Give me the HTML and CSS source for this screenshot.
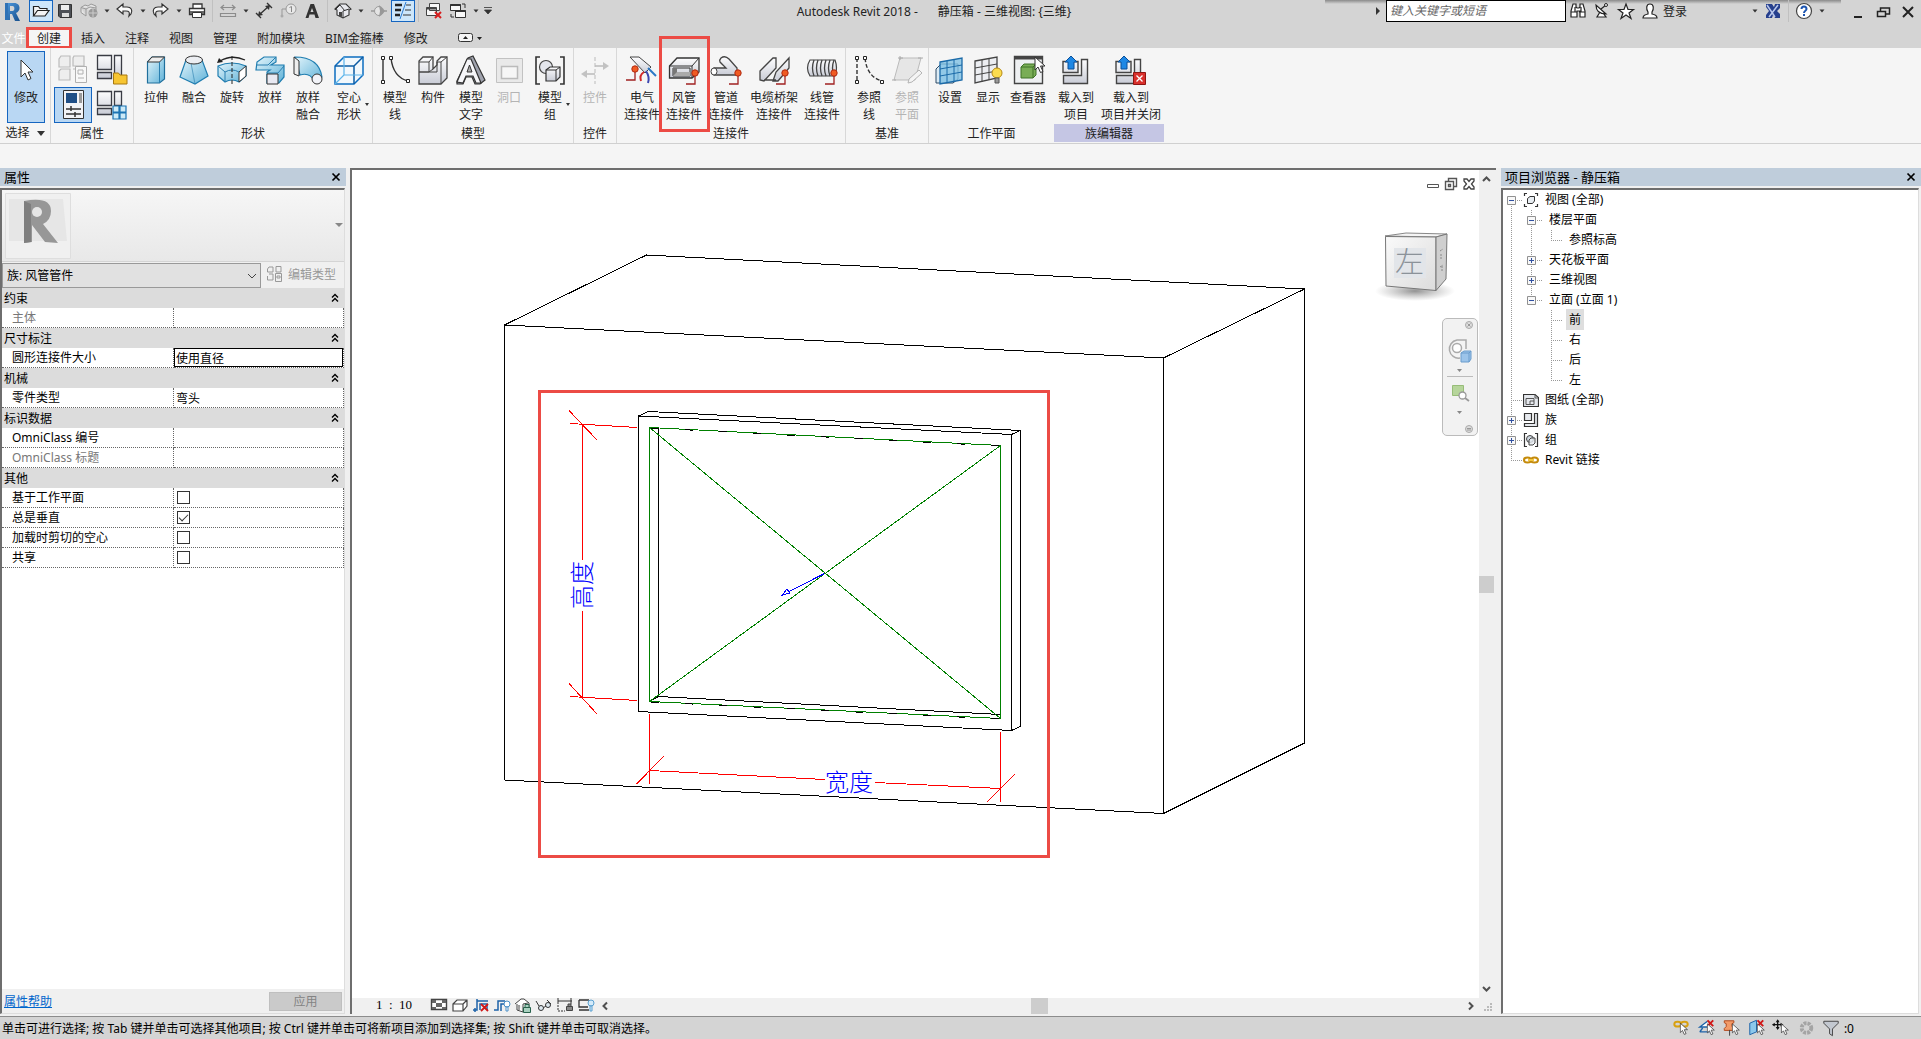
FILE: index.html
```html
<!DOCTYPE html>
<html lang="zh-CN">
<head>
<meta charset="utf-8">
<title>Autodesk Revit 2018 - 静压箱</title>
<link rel="stylesheet" href="styles.css">
</head>
<body>
<svg class="defs" width="0" height="0" aria-hidden="true">
  <defs>
    <linearGradient id="gBlue" x1="0" y1="0" x2="1" y2="1"><stop offset="0" stop-color="#e2f4fb"/><stop offset="1" stop-color="#5fb2d8"/></linearGradient>
    <linearGradient id="gGray" x1="0" y1="0" x2="0" y2="1"><stop offset="0" stop-color="#fdfdfe"/><stop offset="1" stop-color="#c9ccd6"/></linearGradient>
    <linearGradient id="gLogo" x1="0" y1="0" x2="1" y2="1"><stop offset="0" stop-color="#4f9be0"/><stop offset="1" stop-color="#174f8c"/></linearGradient>
    <linearGradient id="gCube" x1="0" y1="0" x2="1" y2="1"><stop offset="0" stop-color="#fafafa"/><stop offset="1" stop-color="#dcdcdc"/></linearGradient>
    <radialGradient id="gShadow"><stop offset="0" stop-color="#777" stop-opacity=".8"/><stop offset="1" stop-color="#999" stop-opacity="0"/></radialGradient>
    <symbol id="dd" viewBox="0 0 12 24"><path d="M3.500 9.500h5l-2.500 3z" fill="#333"/></symbol>
    <symbol id="cursor" viewBox="0 0 12 18"><path d="M1 1v13l3-3 2.500 5.500 2.500-1-2.500-5.500h4.500z" fill="#fff" stroke="#333"/></symbol>
    <symbol id="pin" viewBox="0 0 14 16"><path d="M0 15h9V6" fill="none" stroke="#a02020" stroke-width="1.300"/><circle cx="9" cy="4" r="3.200" fill="#f05a22" stroke="#b02a12"/></symbol>
    <symbol id="collapse" viewBox="0 0 8 10"><path d="M1 4.500 4 1.500l3 3M1 8.500l3-3 3 3" fill="none" stroke="#000" stroke-width="1.400"/></symbol>
    <symbol id="minus" viewBox="0 0 9 9"><path d="M.500.500h8v8h-8z" fill="#f8f8f8" stroke="#919191"/><path d="M2 4.500h5" stroke="#3050a0"/></symbol>
    <symbol id="plus" viewBox="0 0 9 9"><path d="M.500.500h8v8h-8z" fill="#f8f8f8" stroke="#919191"/><path d="M2 4.500h5M4.500 2v5" stroke="#3050a0"/></symbol>
  </defs>
</svg>

<header class="titlebar">
  <div class="qat">
    <button class="qi logo" aria-label="应用程序菜单"><svg width="24" height="24" viewBox="0 0 24 24"><path d="M5 3h9c4 0 5.500 2.500 5.500 5s-1.500 4-3.500 5l4 8h-5l-3-7h-2v6H5zM10 6v5h2.500c2.500 0 2.500-5 0-5z" fill="url(#gLogo)" fill-rule="evenodd"/><path d="M5 3h3v17H5z" fill="#2f72b6"/></svg></button>
    <button class="qi on" aria-label="打开"><svg width="24" height="22" viewBox="0 0 24 22"><path d="M4.500 16V6.500h5l1.500 2h7v2.500M4.500 16l4-5.500H20L16 16z" fill="#f4f4f4" stroke="#222" stroke-width="1.200"/></svg></button>
    <button class="qi" aria-label="保存"><svg width="24" height="22" viewBox="0 0 24 22"><path d="M5.500 4.500h13v13H7l-1.500-1.500z" fill="#4d5056" stroke="#333"/><path d="M8 5h8v5H8z" fill="#eee"/><path d="M9 13h7v4H9z" fill="#ddd"/></svg></button>
    <button class="qi" aria-label="同步"><svg width="24" height="22" viewBox="0 0 24 22"><path d="M4 7.500 8 5l3 1 3-2 5 2v6M4 7.500v5L9 16M4 7.500 9 9l4-2 6 1M9 9v7" fill="#e4e4e4" stroke="#999"/><circle cx="16" cy="13" r="4.500" fill="#999"/><path d="M12 13h8M16 9v8" stroke="#ccc"/></svg></button>
    <svg class="dd"><use href="#dd"/></svg>
    <button class="qi" aria-label="放弃"><svg width="24" height="22" viewBox="0 0 24 22"><path d="m4 9 6-5v3h4c4 0 6 3 4 7l-2 2c1-4 0-5-3-5h-3v3z" fill="#fafafa" stroke="#333" stroke-width="1.200"/></svg></button>
    <svg class="dd"><use href="#dd"/></svg>
    <button class="qi" aria-label="重做"><svg width="24" height="22" viewBox="0 0 24 22"><path d="m19 9-6-5v3H9c-4 0-6 3-4 7l2 2c-1-4 0-5 3-5h3v3z" fill="#fafafa" stroke="#333" stroke-width="1.200"/></svg></button>
    <svg class="dd"><use href="#dd"/></svg>
    <button class="qi" aria-label="打印"><svg width="24" height="22" viewBox="0 0 24 22"><path d="M8 8V4h9v4M4.500 8.500h15v6h-15z" fill="#fff" stroke="#333" stroke-width="1.300"/><path d="M5 11h14v3H5z" fill="#666"/><path d="M7.500 12.500h9v5h-9z" fill="#fff" stroke="#333"/></svg></button>
    <i class="sep"></i>
    <button class="qi" aria-label="测量"><svg width="24" height="22" viewBox="0 0 24 22"><path d="M5 7.500h14M8 5 5 7.500 8 10M16 5l3 2.500-3 2.500M4.500 13.500h15v3h-15z" fill="none" stroke="#8c8c8c" stroke-width="1.200"/></svg></button>
    <svg class="dd"><use href="#dd"/></svg>
    <button class="qi" aria-label="对齐尺寸标注"><svg width="24" height="22" viewBox="0 0 24 22"><path d="M7 15 17 6M4 13l5 5M15 3l5 5" stroke="#333" stroke-width="1.400"/><path d="m6 16 1-5 4 4zM18 5l-5 1 4 4z" fill="#333"/></svg></button>
    <button class="qi" aria-label="按类别标记"><svg width="24" height="22" viewBox="0 0 24 22"><path d="M6 16V9h5" fill="none" stroke="#999"/><circle cx="6" cy="16" r="1.500" fill="#aaa"/><circle cx="15" cy="9" r="5" fill="#e8e8e8" stroke="#999"/><path d="m13.500 7.500 2-1V12" fill="none" stroke="#888"/></svg></button>
    <button class="qi" aria-label="文字"><svg width="24" height="22" viewBox="0 0 24 22"><path d="M10.500 4h3.500L19 18h-3.500l-1-3.500h-5l-1 3.500H5.500zm1.500 4L10.500 12h3z" fill="#333" fill-rule="evenodd"/></svg></button>
    <i class="sep"></i>
    <button class="qi" aria-label="默认三维视图"><svg width="24" height="22" viewBox="0 0 24 22"><path d="m4 9 5-5 6 0 5 5-2 1v5l-6 3-6-3v-5z" fill="#e8e9ee" stroke="#333" stroke-width="1.100"/><path d="m4 10 5-5 5 6M12 18v-7l6-2" fill="none" stroke="#333"/><path d="M8 12h3v5l-3-1z" fill="#444"/></svg></button>
    <svg class="dd"><use href="#dd"/></svg>
    <button class="qi" aria-label="剖面"><svg width="24" height="22" viewBox="0 0 24 22"><path d="M4 11h3M17 11h3" stroke="#999" stroke-width="1.500"/><circle cx="12" cy="11" r="4.500" fill="#e4e4e4" stroke="#999"/><path d="M12 5l6 6-6 6 1-6z" fill="#999"/></svg></button>
    <button class="qi on" aria-label="细线"><svg width="24" height="22" viewBox="0 0 24 22"><path d="M4 5h7M4 10h6M4 15h5" stroke="#222" stroke-width="2.500"/><path d="m15 2-6 17" stroke="#2b7cd3"/><path d="M15 5h5M14 10h6M12 15h8" stroke="#333"/></svg></button>
    <i class="sep"></i>
    <button class="qi" aria-label="关闭隐藏窗口"><svg width="24" height="22" viewBox="0 0 24 22"><path d="M7.500 3.500h10v7h-10zM4.500 7.500h10v8h-10z" fill="#f8f8f8" stroke="#444"/><path d="M4.500 8.500h10" stroke="#444" stroke-width="2"/><path d="m13 12 6 6m0-6-6 6" stroke="#d81e1e" stroke-width="2"/></svg></button>
    <button class="qi" aria-label="切换窗口"><svg width="24" height="22" viewBox="0 0 24 22"><path d="M4.500 4.500h10v6h-10zM9.500 10.500h10v7h-10z" fill="#f8f8f8" stroke="#333"/><path d="M4.500 5h10M9.500 11h10" stroke="#333" stroke-width="2"/><path d="M16 4h3v4M8 17H5v-3" fill="none" stroke="#333"/></svg></button>
    <svg class="dd"><use href="#dd"/></svg>
    <svg class="dd" viewBox="0 0 12 24"><path d="M2 7.500h8M2.500 10h7l-3.500 4z" fill="#333" stroke="#333" stroke-width=".8"/></svg>
  </div>
  <h1 class="title"><span>Autodesk Revit 2018 -</span><span>静压箱 - 三维视图: {三维}</span></h1>
  <div class="info">
    <svg width="8" height="22" viewBox="0 0 8 22"><path d="M2 7v8l4-4z" fill="#333"/></svg>
    <input class="search" type="text" aria-label="搜索" placeholder="键入关键字或短语">
    <button class="qi" aria-label="查找"><svg width="24" height="22" viewBox="0 0 24 22"><path d="M7 4h3v3l1 1h2l1-1V4h3l2 7v6h-5v-6h-3v6H5v-6zM5 12h6M13 12h6M9 7v5M15 7v5" fill="#fff" stroke="#222" stroke-width="1.200"/></svg></button>
    <button class="qi" aria-label="通讯中心"><svg width="24" height="22" viewBox="0 0 24 22"><path d="M6 5c0 6 4 9 10 9zM11 9l5-4M10 12l-3 5h9l-3-4" fill="#fff" stroke="#222" stroke-width="1.200"/><circle cx="16" cy="5" r="1.500" fill="#fff" stroke="#222"/></svg></button>
    <button class="qi" aria-label="收藏夹"><svg width="24" height="22" viewBox="0 0 24 22"><path d="m12 4 2 5.500h5.500L15 13l2 5.500-5-3.500-5 3.500L9 13 4.500 9.500H10z" fill="#fff" stroke="#222" stroke-width="1.200"/></svg></button>
    <button class="qi" aria-label="用户"><svg width="24" height="22" viewBox="0 0 24 22"><path d="M12 4c-4 0-4 5-2 8v2c-3 .500-5 1.500-5 4h14c0-2.500-2-3.500-5-4v-2c2-3 2-8-2-8z" fill="#fff" stroke="#222" stroke-width="1.200"/></svg></button>
    <button class="login">登录</button>
    <svg class="dd"><use href="#dd"/></svg>
    <button class="qi" aria-label="Exchange"><svg width="24" height="22" viewBox="0 0 24 22"><path d="M5 4h6l2 3 1-3h5v4l-3 3 3 3v4h-5l-2-3-1 3H5v-3l3-4-3-4z" fill="#263f8d"/><path d="m6 5 8 12M17 5 8 17" stroke="#b9c7ec" stroke-width="1.500"/></svg></button>
    <i class="sep"></i>
    <button class="qi" aria-label="帮助"><svg width="24" height="22" viewBox="0 0 24 22"><circle cx="12" cy="11" r="7.500" fill="#fff" stroke="#444" stroke-width="1.200"/><path d="M9.500 9c0-3.500 5-3.500 5 0 0 2-2.500 1.500-2.500 4M12 14v2" fill="none" stroke="#1d55b0" stroke-width="2"/></svg></button>
    <svg class="dd"><use href="#dd"/></svg>
    <div class="winbtns">
      <button class="qi" aria-label="最小化"><svg width="24" height="22" viewBox="0 0 24 22"><path d="M8 17h8" stroke="#222" stroke-width="2"/></svg></button>
      <button class="qi" aria-label="还原"><svg width="24" height="22" viewBox="0 0 24 22"><path d="M9.500 11V8h9v6H15M6.500 11.500h8v5h-8z" fill="none" stroke="#222" stroke-width="1.500"/></svg></button>
      <button class="qi" aria-label="关闭"><svg width="24" height="22" viewBox="0 0 24 22"><path d="m7 7 10 10M17 7 7 17" stroke="#222" stroke-width="2"/></svg></button>
    </div>
  </div>
</header>

<nav class="tabs">
  <button class="tab file">文件</button>
  <button class="tab active">创建</button>
  <button class="tab">插入</button>
  <button class="tab">注释</button>
  <button class="tab">视图</button>
  <button class="tab">管理</button>
  <button class="tab">附加模块</button>
  <button class="tab">BIM金箍棒</button>
  <button class="tab">修改</button>
  <button class="tab mini" aria-label="最小化功能区"><svg width="30" height="12" viewBox="0 0 30 12"><rect x=".500" y="1.500" width="14" height="8" rx="2" fill="#f4f4f4" stroke="#333"/><path d="m5 7 2.500-3L10 7zM19 5h5l-2.500 3z" fill="#222"/></svg></button>
</nav>

<section class="ribbon">
  <div class="panel p-select">
    <div class="tools"><button class="rb chosen"><svg class="ic" viewBox="0 0 32 32"><path d="M11 6v17l4-4 3 7 3-1.500-3-6.500h5z" fill="#fff" stroke="#333"/></svg><span>修改</span></button></div>
    <div class="ptitle">选择 <svg width="8" height="5" viewBox="0 0 8 5"><path d="M0 0h8L4 5z" fill="#333"/></svg></div>
  </div>
  <div class="panel p-props">
    <div class="grid4">
      <button class="sb" disabled aria-label="族类型"><svg class="ic" viewBox="0 0 32 32"><path d="M4 3h9v11H2V6zM17 3h10v10H16V5zM4 16h9v11H2v-9zM16 16h8" fill="#eee" stroke="#bbb" stroke-width="1.200"/><path d="M18.500 13.500h11v16h-11zM21 17h5v4h-5zM21 25h6" fill="#f8f8f8" stroke="#b0b0b0"/></svg></button>
      <button class="sb" aria-label="族类别和族参数"><svg class="ic" viewBox="0 0 32 32"><path d="M2.500 2.500h14v14h-14zM19.500 2.500h7v23h-7zM2.500 19.500h14v6h-14z" fill="url(#gGray)" stroke="#3a3c44" stroke-width="1.300"/><path d="M18.500 31v-11h5l1.500 2h7v9z" fill="#f7c531" stroke="#a87910"/></svg></button>
      <button class="sb chosen" aria-label="属性"><svg class="ic" viewBox="0 0 32 32"><path d="M6.500 1.500h20v28h-20z" fill="#f2f3f6" stroke="#333"/><path d="M9 4h11v10H9z" fill="#1e4e86"/><path d="M22 4h3v10h-3z" fill="#999"/><path d="M9 20h15M9 25h15M14 17v5M18 23v5" stroke="#333" stroke-width="1.500"/></svg></button>
      <button class="sb" aria-label="族类型选择"><svg class="ic" viewBox="0 0 32 32"><path d="M2.500 2.500h14v14h-14zM19.500 2.500h7v14h-7zM2.500 19.500h14v6h-14z" fill="url(#gGray)" stroke="#3a3c44" stroke-width="1.300"/><path d="M18 17h6v6h-6zM25 17h6v6h-6zM18 24h6v6h-6zM25 24h6v6h-6z" fill="#cdeaf7" stroke="#1c74b4" stroke-width="1.200"/></svg></button>
    </div>
    <div class="ptitle">属性</div>
  </div>
  <div class="panel p-shape">
    <div class="tools">
      <button class="rb"><svg class="ic" viewBox="0 0 32 32"><path d="M7.500 8v21h12l5-4V3H12z" fill="url(#gBlue)" stroke="#1f6f9c" stroke-width="1.200"/><path d="M7.500 8 12 3h12.500l-5 5z" fill="#eee" stroke="#333"/><path d="M19.500 8v21" stroke="#2a7fb0"/></svg><span>拉伸</span></button>
      <button class="rb"><svg class="ic" viewBox="0 0 32 32"><path d="m8 6-6 17 15 7 13-8L24 6z" fill="url(#gBlue)" stroke="#1f7db0" stroke-width="1.200"/><path d="m13 9 4 21" stroke="#2a7fb0" opacity=".6"/><ellipse cx="16" cy="6" rx="8.500" ry="4" fill="#eceef2" stroke="#333"/></svg><span>融合</span></button>
      <button class="rb"><svg class="ic" viewBox="0 0 32 32"><path d="M2 12q14-6 28 0v10l-7 6q-7-4-14 0l-7-6z" fill="url(#gBlue)" stroke="#1f7db0" stroke-width="1.200"/><path d="M23 18 30 12v10l-7 6z" fill="#fff" stroke="#333"/><path d="M2 12l7 6q7-4 14 0M9 18v10" fill="none" stroke="#2a7fb0"/><path d="M16 2v28" stroke="#222" stroke-dasharray="4 2"/><path d="M4 7Q16 0 29 6" fill="none" stroke="#222" stroke-width="1.300"/><path d="m1 9 2-5 4 4z" fill="#222"/></svg><span>旋转</span></button>
      <button class="rb"><svg class="ic" viewBox="0 0 32 32"><path d="M10 3h12v5l-5 3h13v12l-5 6H13V18l3-2H2l1-8z" fill="url(#gBlue)" stroke="#1f7db0" stroke-width="1.200"/><path d="M2 11h12l8-8M13 19h11l6-7" fill="none" stroke="#2a7fb0"/><path d="M13 20h11v10H13z" fill="#e8e9f2" stroke="#333"/></svg><span>放样</span></button>
      <button class="rb"><svg class="ic" viewBox="0 0 32 32"><path d="M3 3q24 0 27 20l-8 4q-4-9-14-6z" fill="url(#gBlue)" stroke="#1f7db0" stroke-width="1.200"/><path d="M2 3l5 4v15l-5-2z" fill="#eee" stroke="#333"/><circle cx="25" cy="25" r="5" fill="#f2f3f8" stroke="#333"/></svg><span>放样<br>融合</span></button>
      <button class="rb w44 menu"><svg class="ic" viewBox="0 0 32 32"><path d="M2 12 11 3h19v18l-9 9H2z" fill="#f2f8fc" stroke="#0d6dc0" stroke-width="1.500"/><path d="M2 12h19v18M21 12l9-9" fill="none" stroke="#0d5ca4" stroke-width="1.500"/><path d="M11 3v18L2 30M11 21h19" fill="none" stroke="#5ab4ea" stroke-width="1.200"/></svg><span>空心<br>形状</span></button>
    </div>
    <div class="ptitle">形状</div>
  </div>
  <div class="panel p-model">
    <div class="tools">
      <button class="rb"><svg class="ic" viewBox="0 0 32 32"><path d="M4 4v24M12 4q2 19 17 23" fill="none" stroke="#333" stroke-width="1.400"/><path d="M2.500 2.500h3v3h-3zM2.500 26.500h3v3h-3zM10.500 2.500h3v3h-3zM27.500 25.500h3v3h-3z" fill="#fff" stroke="#222"/></svg><span>模型<br>线</span></button>
      <button class="rb"><svg class="ic" viewBox="0 0 32 32"><path d="M2 18V7l4-4h10v12l4-4V7l4-4h6v21l-6 6H2z" fill="url(#gGray)" stroke="#444" stroke-width="1.300"/><path d="M2 8h10v10H2M12 8l4-5M20 8v10H2M24 8v22M20 8h4l6-5M12 18l4-3" fill="none" stroke="#444"/></svg><span>构件</span></button>
      <button class="rb"><svg class="ic" viewBox="0 0 32 32"><path d="m2 27 11-23 5-2 12 24-5 4h-5l-3-7h-6l-3 7H2z" fill="#9fa2ad" stroke="#333" stroke-width="1.200"/><path d="m2 28 10-23h4l10 24h-5l-3-7h-7l-3 7z" fill="#f6f6f9" stroke="#333" stroke-width="1.200"/><path d="m12 18 2.500-7 2.500 7z" fill="#aaa" stroke="#333"/></svg><span>模型<br>文字</span></button>
      <button class="rb" disabled><svg class="ic" viewBox="0 0 32 32"><path d="M3.500 4.500h26v24h-26z" fill="#e9e9e9" stroke="#c2c2c2"/><path d="M8.500 12.500h16v12h-16z" fill="#f6f6f6" stroke="#bbb" stroke-width="1.500"/></svg><span>洞口</span></button>
      <button class="rb w44 menu"><svg class="ic" viewBox="0 0 32 32"><path d="M6 3H2v27h4M26 3h4v27h-4" fill="none" stroke="#333" stroke-width="1.600"/><circle cx="12" cy="13" r="6.500" fill="#e4e6ec" stroke="#444" stroke-width="1.200"/><path d="M12 16l4-3h10v10l-4 4H12z" fill="url(#gGray)" stroke="#333" stroke-width="1.200"/><path d="M12 16h10v11M22 16l4-3" fill="none" stroke="#333"/></svg><span>模型<br>组</span></button>
    </div>
    <div class="ptitle">模型</div>
  </div>
  <div class="panel p-ctrl">
    <div class="tools"><button class="rb w42" disabled><svg class="ic" viewBox="0 0 32 32"><path d="M16 3v27" stroke="#bbb" stroke-dasharray="4 2"/><path d="M16 12h11M4 20h12" stroke="#bbb" stroke-width="1.500"/><path d="m24 8 6 4-6 4zM8 16l-6 4 6 4z" fill="#c2c2c2"/></svg><span>控件</span></button></div>
    <div class="ptitle">控件</div>
  </div>
  <div class="panel p-conn">
    <div class="tools">
      <button class="rb w42"><svg class="ic" viewBox="0 0 32 32"><path d="M4 3h9l12 10-6 6z" fill="url(#gGray)" stroke="#444"/><path d="m22 14 8 8" stroke="#2b78c5" stroke-width="2"/><path d="M20 17q4 6 2 12" fill="none" stroke="#3c46b0" stroke-width="2"/><path d="M18 18q-5 3-3 9" fill="none" stroke="#d22a2a" stroke-width="2"/><use href="#pin" x="0" y="11" width="14" height="16"/></svg><span>电气<br>连接件</span></button>
      <button class="rb w42 marked"><svg class="ic" viewBox="0 0 32 32"><path d="M1.500 12 9 4h22v14l-7 6H1.500z" fill="url(#gGray)" stroke="#333" stroke-width="1.300"/><path d="M1.500 12H24v12M24 12l7-8M5 14h17v8H5z" fill="none" stroke="#333"/><path d="M5 14h4v8H5z" fill="#777"/><path d="M9 18h13v4H5z" fill="#aaa"/><use href="#pin" x="18" y="15" width="14" height="16"/></svg><span>风管<br>连接件</span></button>
      <button class="rb w42"><svg class="ic" viewBox="0 0 32 32"><path d="M11 4q4-3 8 1l8 9v7H4q-4-3 0-7h12l-6-6q-1-2 1-4z" fill="url(#gGray)" stroke="#444" stroke-width="1.300"/><ellipse cx="4" cy="17.500" rx="3" ry="3.500" fill="#fff" stroke="#444"/><use href="#pin" x="19" y="15" width="14" height="16"/></svg><span>管道<br>连接件</span></button>
      <button class="rb w54"><svg class="ic" viewBox="0 0 32 32"><path d="M2 17 15 4h3v10L6 27l-4-1zM15 27l3-9L31 4v10L20 27zM6 26h12" fill="url(#gGray)" stroke="#444" stroke-width="1.300"/><use href="#pin" x="18" y="15" width="14" height="16"/></svg><span>电缆桥架<br>连接件</span></button>
      <button class="rb w42"><svg class="ic" viewBox="0 0 32 32"><path d="M4 6h25q3 8 0 16H4q-5-8 0-16z" fill="url(#gGray)" stroke="#444" stroke-width="1.200"/><path d="M8 6q-3 8 0 16M12 6q-3 8 0 16M16 6q-3 8 0 16M20 6q-3 8 0 16M24 6q-3 8 0 16M28 6q-3 8 0 16" fill="none" stroke="#444" stroke-width="1.300"/><use href="#pin" x="19" y="15" width="14" height="16"/></svg><span>线管<br>连接件</span></button>
    </div>
    <div class="ptitle">连接件</div>
  </div>
  <div class="panel p-datum">
    <div class="tools">
      <button class="rb"><svg class="ic" viewBox="0 0 32 32"><path d="M4 4v24M12 4q2 19 17 23" fill="none" stroke="#333" stroke-width="1.400" stroke-dasharray="4 2"/><path d="M2.500 2.500h3v3h-3zM2.500 26.500h3v3h-3zM10.500 2.500h3v3h-3zM27.500 26.500h3v3h-3z" fill="#fff" stroke="#222"/></svg><span>参照<br>线</span></button>
      <button class="rb" disabled><svg class="ic" viewBox="0 0 32 32"><path d="M9 4h21l-6 22H3z" fill="#e6e6e6" stroke="#bbb"/><path d="M7 4h5M9 2v4M27 4h5M1 26h4" stroke="#aaa"/><path d="m17 29 1-4 10-9 3 3-10 9z" fill="#f4f4f4" stroke="#b4b4b4"/></svg><span>参照<br>平面</span></button>
    </div>
    <div class="ptitle">基准</div>
  </div>
  <div class="panel p-plane">
    <div class="tools">
      <button class="rb"><svg class="ic" viewBox="0 0 32 32"><path d="M2 15l5-5h17v15l-5 4H2z" fill="#dcebf4" stroke="#2c4a66"/><path d="M6 8 28 4v22L6 30z" fill="#7fc0e4" fill-opacity=".8" stroke="#1b6aa8" stroke-width="1.300"/><path d="M13 7v22M20 5v22M6 15l22-4M6 22l22-4" stroke="#1b6aa8"/></svg><span>设置</span></button>
      <button class="rb"><svg class="ic" viewBox="0 0 32 32"><path d="M3 7 25 3v21L3 29z" fill="#eceef2" stroke="#444" stroke-width="1.300"/><path d="M10 6v22M17 4v22M3 14l22-4M3 21l22-4" stroke="#444"/><circle cx="25" cy="19" r="5" fill="#fbdc4e" stroke="#b68a14"/><path d="M23 24h4v5h-4z" fill="#999" stroke="#555"/></svg><span>显示</span></button>
      <button class="rb w42"><svg class="ic" viewBox="0 0 32 32"><path d="M2.500 2.500h28v27h-28z" fill="#eef0f2" stroke="#444" stroke-width="1.400"/><path d="M2 4h29" stroke="#444" stroke-width="3"/><path d="m9 13 3-3h12v11l-3 3H9z" fill="#79ad56" stroke="#3e7326"/><path d="M9 13h12v11M21 13l3-3" fill="none" stroke="#3e7326"/><use href="#cursor" x="22" y="2" width="12" height="18"/></svg><span>查看器</span></button>
    </div>
    <div class="ptitle">工作平面</div>
  </div>
  <div class="panel p-family">
    <div class="tools">
      <button class="rb w44"><svg class="ic" viewBox="0 0 32 32"><path d="M3 7.500h15v11H3zM21.500 5.500h6v24h-24v-8h18z" fill="url(#gGray)" stroke="#444" stroke-width="1.400"/><path d="M11 2 5 8h3v7h6V8h3z" fill="#1e88e5" stroke="#0b4f98"/></svg><span>载入到<br>项目</span></button>
      <button class="rb w66"><svg class="ic" viewBox="0 0 32 32"><path d="M1 7.500h15v11H1zM19.500 5.500h6v24h-24v-8h18z" fill="url(#gGray)" stroke="#444" stroke-width="1.400"/><path d="M9 2 3 8h3v7h6V8h3z" fill="#1e88e5" stroke="#0b4f98"/><path d="M18.500 18.500h12v12h-12z" fill="#d9302c" stroke="#8e1512"/><path d="m21.500 21.500 6 6m0-6-6 6" stroke="#fff" stroke-width="1.300"/></svg><span>载入到<br>项目并关闭</span></button>
    </div>
    <div class="ptitle">族编辑器</div>
  </div>
</section>

<main class="work">
  <aside class="side props">
    <h2 class="head">属性 <button class="x" aria-label="关闭属性"><svg width="10" height="10" viewBox="0 0 10 10"><path d="m1.500 1.500 7 7m0-7-7 7" stroke="#000" stroke-width="1.700"/></svg></button></h2>
    <div class="box">
      <div class="preview">
        <svg width="66" height="66" viewBox="0 0 66 66"><path d="M.500.500h65v65H.500z" fill="#f0f0f0" stroke="#dedede"/><path d="M4 6h54l4 42H4z" fill="#e6e6e6"/><path d="M19 8q27-5 27 10 0 9-8 13l15 19-13-1-13-17v17l-8 1z" fill="#979797"/><path d="M19 8l7 3v38l-7 1z" fill="#7f7f7f"/><ellipse cx="32" cy="19" rx="5" ry="5" fill="#e6e6e6"/></svg>
        <svg width="8" height="5" viewBox="0 0 8 5"><path d="M0 0h8L4 4z" fill="#888"/></svg>
      </div>
      <div class="selector">
        <select aria-label="族类型选择器"><option>族: 风管管件</option></select>
        <button class="edit" disabled><svg width="16" height="16" viewBox="0 0 16 16"><path d="M2 1h4v5H.500V3zM9 .500h5V6H9zM2 8h4v6H.500v-4M8.500 7.500h6v8h-6zM10 10h3v2h-3z" fill="none" stroke="#999"/></svg>编辑类型</button>
      </div>
      <table class="params">
        <colgroup><col class="c1"><col></colgroup>
        <tbody><tr class="grp"><th colspan="2"><span>约束</span><svg width="8" height="10"><use href="#collapse"/></svg></th></tr>
        <tr><th class="off">主体</th><td></td></tr></tbody>
        <tbody><tr class="grp"><th colspan="2"><span>尺寸标注</span><svg width="8" height="10"><use href="#collapse"/></svg></th></tr>
        <tr><th><label for="f1">圆形连接件大小</label></th><td><input id="f1" class="val focus" type="text" value="使用直径"></td></tr></tbody>
        <tbody><tr class="grp"><th colspan="2"><span>机械</span><svg width="8" height="10"><use href="#collapse"/></svg></th></tr>
        <tr><th><label for="f2">零件类型</label></th><td><input id="f2" class="val" type="text" value="弯头"></td></tr></tbody>
        <tbody><tr class="grp"><th colspan="2"><span>标识数据</span><svg width="8" height="10"><use href="#collapse"/></svg></th></tr>
        <tr><th>OmniClass 编号</th><td></td></tr>
        <tr><th class="off">OmniClass 标题</th><td></td></tr></tbody>
        <tbody><tr class="grp"><th colspan="2"><span>其他</span><svg width="8" height="10"><use href="#collapse"/></svg></th></tr>
        <tr><th><label for="c1">基于工作平面</label></th><td><input id="c1" type="checkbox"></td></tr>
        <tr><th><label for="c2">总是垂直</label></th><td><input id="c2" type="checkbox" checked></td></tr>
        <tr><th><label for="c3">加载时剪切的空心</label></th><td><input id="c3" type="checkbox"></td></tr>
        <tr><th><label for="c4">共享</label></th><td><input id="c4" type="checkbox"></td></tr></tbody>
      </table>
      <div class="foot"><a href="#help">属性帮助</a><button class="apply" disabled>应用</button></div>
    </div>
  </aside>

  <section class="view">
    <div class="stage">
      <svg class="drawing" viewBox="352 170 1127 828" aria-label="静压箱三维视图">
        <g class="ln black">
          <path d="M504.500 325 646.500 255 1304.500 289 1163.500 358zM504.500 325V780L1163.500 813.500V358M1163.500 813.500 1304.500 743V289"/>
          <path d="M638.500 416 1011.500 434.500V730.500L638.500 711.500zM638.500 416 648.500 411.500 1020.500 430.500V726.500L1011.500 730.500M1011.500 434.500 1020.500 430.500"/>
          <path d="M649.500 428.500H658.500V696.500L1000.500 714.500M658.500 696.500 649.500 701.500"/>
        </g>
        <g class="ln green"><path d="M649.500 427.500 1000.500 445.500V718.500L649.500 701.500zL1000.500 718.500M1000.500 445.500 649.500 701.500"/></g>
        <path class="ln black dash" d="M651 428 1000 446M651 702 1000 719"/>
        <g class="ln red">
          <path d="M582.500 424V560M582.500 611V697M569 410.500 597 440M569 683.500 597 714M570 423.500 637 427.500M570 696.500 637 700.500"/>
          <path d="M649.500 714V784M1000.500 732V802M649.500 770.500 825 779.500M875 782.500 1000.500 788.500M636.500 784 663.500 756.500M987 802 1014.500 774.500"/>
        </g>
        <path class="ln blue" d="M824.500 573.500 788 592M782.500 595 787 589 790 593z"/>
        <text class="dim" x="825" y="791">宽度</text>
        <text class="dim" transform="translate(591 609) rotate(-90)">高度</text>
        <rect class="callout" x="539.500" y="391.500" width="509" height="465"/>
      </svg>
      <div class="mdi">
        <button aria-label="最小化视图"><svg width="14" height="14" viewBox="0 0 14 14"><path d="M1.500 7.500h11v3h-11z" fill="#fff" stroke="#555"/></svg></button>
        <button aria-label="还原视图"><svg width="14" height="14" viewBox="0 0 14 14"><path d="M4.500 1.500h8v8h-8z" fill="#fff" stroke="#555" stroke-width="1.400"/><path d="M1.500 4.500h8v8h-8zM4.500 7.500h2v2h-2z" fill="#fff" stroke="#555" stroke-width="1.400"/></svg></button>
        <button aria-label="关闭视图"><svg width="14" height="14" viewBox="0 0 14 14"><path d="M2 2h3l2 2.500L9 2h3v2L9.500 7l2.500 3v2H9L7 9.500 5 12H2v-2l2.500-3L2 4z" fill="#fff" stroke="#444" stroke-width="1.300"/></svg></button>
      </div>
      <svg class="cube" width="90" height="74" viewBox="0 0 90 74" aria-label="ViewCube"><ellipse cx="42" cy="60" rx="40" ry="10" fill="url(#gShadow)"/><path d="M12 5 33 2 74 3 63 6z" fill="#f4f4f4" stroke="#888"/><path d="M12.500 5.500 63 6v53.500L13 55z" fill="url(#gCube)" stroke="#777"/><path d="M63 6 74 3 73 48 63 59.500z" fill="#cfcfcf" stroke="#777"/><path d="M21 17h32v30H21z" fill="#e2e5e9"/><path d="M67 20l3-2M68 23v6M67 36l3-2M69 35v6" stroke="#888" stroke-dasharray="2 1"/><text x="22" y="42" class="face">左</text></svg>
      <div class="navbar">
        <button aria-label="关闭导航栏"><svg width="34" height="12" viewBox="0 0 34 12"><circle cx="26" cy="6" r="3.500" fill="#ddd" stroke="#aaa"/><path d="m24.500 4.500 3 3m0-3-3 3" stroke="#999"/></svg></button>
        <button aria-label="控制盘"><svg width="34" height="45" viewBox="0 0 34 45"><path d="M23 18V9H14a9 9 0 1 0 3 18" fill="#f4f4f4" stroke="#aaa" stroke-width="1.500"/><circle cx="14" cy="17" r="4.500" fill="#fff" stroke="#aaa" stroke-width="1.500"/><path d="m18 22 3-2h7v8l-2 3h-8z" fill="#9cc4ea" stroke="#6a9ccc"/><path d="M18 22h8v9M26 22l2-2" fill="none" stroke="#6a9ccc"/><path d="M14 38h5l-2.500 3z" fill="#888"/></svg></button>
        <button class="line" aria-label="缩放"><svg width="34" height="47" viewBox="0 0 34 47"><path d="M9.500 9.500h11v10h-11z" fill="#b6d59b" stroke="#97bd78"/><circle cx="19.500" cy="19.500" r="3.500" fill="#fff" stroke="#999" stroke-width="1.300"/><path d="m22 22 4 3" stroke="#999" stroke-width="1.800"/><path d="M14 35h5l-2.500 3z" fill="#888"/></svg></button>
        <button aria-label="导航栏选项"><svg width="34" height="12" viewBox="0 0 34 12"><circle cx="26" cy="6" r="3.500" fill="#ddd" stroke="#aaa"/><path d="M24 5.500h4M24 7h4" stroke="#999"/></svg></button>
      </div>
    </div>
    <div class="vscroll">
      <svg width="15" height="17" viewBox="0 0 15 17"><path d="m4 11 3.500-3.500L11 11" fill="none" stroke="#505050" stroke-width="2"/></svg>
      <i></i>
      <svg width="15" height="17" viewBox="0 0 15 17"><path d="m4 6 3.500 3.500L11 6" fill="none" stroke="#505050" stroke-width="2"/></svg>
    </div>
    <div class="viewbar">
      <span class="scale">1&nbsp;&nbsp;:&nbsp; 10</span>
      <button class="vi" aria-label="详细程度"><svg viewBox="0 0 18 16"><path d="M1.500 1.500h15v10h-15z" fill="#fff" stroke="#444" stroke-width="1.400"/><path d="M2 2h4v3H2zM12 2h4v3h-4zM6 5h6v4H6zM2 9h4v2H2zM12 9h4v2h-4z" fill="#666"/></svg></button>
      <button class="vi" aria-label="视觉样式"><svg viewBox="0 0 18 16"><path d="M2 6l4-4h10v6l-4 5H2zM2 6h10v7M12 6l4-4" fill="#fff" stroke="#444" stroke-width="1.200"/></svg></button>
      <button class="vi" aria-label="裁剪视图"><svg viewBox="0 0 18 16"><path d="M1 12h4V3h11M8 12V6h7v6M5 1v4M3 10v4" fill="none" stroke="#1c62a8" stroke-width="1.500"/><path d="m9 6 7 7m0-7-7 7" stroke="#d01818" stroke-width="1.800"/></svg></button>
      <button class="vi" aria-label="显示裁剪区域"><svg viewBox="0 0 18 16"><path d="M1 12h4V3h7M8 13V6h4" fill="none" stroke="#1c62a8" stroke-width="1.500"/><circle cx="14" cy="6" r="3" fill="#fff" stroke="#4a90c8"/><path d="M13 9h2v4h-2z" fill="#fff" stroke="#4a90c8"/></svg></button>
      <button class="vi" aria-label="锁定三维视图"><svg viewBox="0 0 18 16"><path d="m1 6 6-5h3l5 4v4M3 6v6l6 2M9 14V6l5-1M5 7v5" fill="#fff" stroke="#444"/><path d="M9.500 9.500h7v5h-7zM11 9V6.500h4V9" fill="#a9d0bf" stroke="#27614b"/></svg></button>
      <button class="vi" aria-label="临时隐藏"><svg viewBox="0 0 18 16"><path d="M1 3l3 5M8 10l3-2M12 2l4 4" stroke="#333"/><circle cx="6" cy="10" r="2.500" fill="#dce8f0" stroke="#333"/><circle cx="13" cy="7" r="2.500" fill="#dce8f0" stroke="#333"/></svg></button>
      <button class="vi" aria-label="显示约束"><svg viewBox="0 0 18 16"><path d="M2 3h14M2 0v6M15 0v6" stroke="#333"/><path d="M2 7v6h7" fill="none" stroke="#333" stroke-dasharray="2 1"/><path d="M10.500 8.500h6v4h-6zM12 8V6h3v2" fill="#888" stroke="#444"/></svg></button>
      <button class="vi" aria-label="分析模型"><svg viewBox="0 0 18 16"><path d="M2 2h10M2 2v7h9M2 12h10" fill="none" stroke="#333" stroke-width="1.300"/><circle cx="14" cy="5" r="3" fill="#d5ebfa" stroke="#5aa0d0"/><path d="M13 8h2v5h-2z" fill="#d5ebfa" stroke="#5aa0d0"/></svg></button>
      <div class="hscroll">
        <svg width="17" height="16" viewBox="0 0 17 16"><path d="m10 4.500-3.500 3.500L10 11.500" fill="none" stroke="#505050" stroke-width="2"/></svg>
        <i></i>
        <svg width="15" height="16" viewBox="0 0 15 16"><path d="m5 4.500 3.500 3.500L5 11.500" fill="none" stroke="#505050" stroke-width="2"/></svg>
      </div>
      <svg class="grip" width="17" height="16" viewBox="0 0 17 16"><path d="M11 5h2v2h-2zM8 8h2v2H8zM11 8h2v2h-2zM5 11h2v2H5zM8 11h2v2H8zM11 11h2v2h-2z" fill="#bbb"/></svg>
    </div>
  </section>

  <aside class="side browser">
    <h2 class="head">项目浏览器 - 静压箱 <button class="x" aria-label="关闭项目浏览器"><svg width="10" height="10" viewBox="0 0 10 10"><path d="m1.500 1.500 7 7m0-7-7 7" stroke="#000" stroke-width="1.700"/></svg></button></h2>
    <div class="box tree" role="tree">
      <div class="row"><i class="g down"><svg><use href="#minus"/></svg></i><svg class="ti" viewBox="0 0 16 16"><path d="M4 1.500H1.500V4M12 1.500h2.500V4M4 14.500H1.500V12M12 14.500h2.500V12" fill="none" stroke="#333" stroke-width="1.200"/><path d="M4.500 6.500 7 4.500h4.500V9L9.500 11.500h-5z" fill="#e8edf2" stroke="#333"/></svg><span>视图 (全部)</span></div>
      <div class="row"><i class="g v"></i><i class="g all"><svg><use href="#minus"/></svg></i><span>楼层平面</span></div>
      <div class="row"><i class="g v"></i><i class="g v"></i><i class="g end"></i><span>参照标高</span></div>
      <div class="row"><i class="g v"></i><i class="g all"><svg><use href="#plus"/></svg></i><span>天花板平面</span></div>
      <div class="row"><i class="g v"></i><i class="g all"><svg><use href="#plus"/></svg></i><span>三维视图</span></div>
      <div class="row"><i class="g v"></i><i class="g end"><svg><use href="#minus"/></svg></i><span>立面 (立面 1)</span></div>
      <div class="row"><i class="g v"></i><i class="g"></i><i class="g all"></i><span><mark>前</mark></span></div>
      <div class="row"><i class="g v"></i><i class="g"></i><i class="g all"></i><span>右</span></div>
      <div class="row"><i class="g v"></i><i class="g"></i><i class="g all"></i><span>后</span></div>
      <div class="row"><i class="g v"></i><i class="g"></i><i class="g end"></i><span>左</span></div>
      <div class="row"><i class="g all"></i><svg class="ti" viewBox="0 0 16 16"><path d="M.500 2.500H12l3.500 3v9H.500z" fill="#e6e9ee" stroke="#333" stroke-width="1.200"/><path d="M3 6.500h8v6H3zM7 12V9h4M12 2v4h3" fill="none" stroke="#555"/></svg><span>图纸 (全部)</span></div>
      <div class="row"><i class="g all"><svg><use href="#plus"/></svg></i><svg class="ti" viewBox="0 0 16 16"><path d="M1.500 1.500h7v7h-7zM11.500 1.500h3v13h-13v-3h10z" fill="#e6e9ee" stroke="#333" stroke-width="1.200"/></svg><span>族</span></div>
      <div class="row"><i class="g all"><svg><use href="#plus"/></svg></i><svg class="ti" viewBox="0 0 16 16"><path d="M4 1.500H1.500v13H4M12 1.500h2.500v13H12" fill="none" stroke="#333" stroke-width="1.200"/><circle cx="7" cy="7" r="3.500" fill="#ccd5de" stroke="#444"/><path d="m6 8 2-2h4v5l-2 2H6z" fill="#e6ebf0" fill-opacity=".8" stroke="#444"/></svg><span>组</span></div>
      <div class="row"><i class="g end"></i><svg class="ti" viewBox="0 0 16 16"><ellipse cx="4.500" cy="8" rx="3.500" ry="2.500" fill="none" stroke="#c48a0a" stroke-width="2"/><ellipse cx="11.500" cy="8" rx="3.500" ry="2.500" fill="none" stroke="#c48a0a" stroke-width="2"/><path d="M5 8h6" stroke="#f4c63c" stroke-width="2"/></svg><span>Revit 链接</span></div>
    </div>
  </aside>
</main>

<footer class="status">
  <p>单击可进行选择; 按 Tab 键并单击可选择其他项目; 按 Ctrl 键并单击可将新项目添加到选择集; 按 Shift 键并单击可取消选择。</p>
  <div class="sticons">
    <button aria-label="选择链接"><svg viewBox="0 0 26 20"><ellipse cx="9" cy="6" rx="3.500" ry="2.500" fill="none" stroke="#d8a010" stroke-width="2"/><ellipse cx="16" cy="6" rx="3.500" ry="2.500" fill="none" stroke="#d8a010" stroke-width="2"/><use href="#cursor" x="11" y="4" width="9" height="14"/></svg></button>
    <button aria-label="选择基线图元"><svg viewBox="0 0 26 20"><path d="M14 3 6 9h8M6 14h10M6 14l3-4" fill="#fff" stroke="#1c62a8" stroke-width="1.400"/><path d="m14 2 6 6m0-6-6 6" stroke="#d01818" stroke-width="2"/><use href="#cursor" x="13" y="5" width="9" height="13"/></svg></button>
    <button aria-label="选择锁定图元"><svg viewBox="0 0 26 20"><path d="M5.500 2.500h10v2l-2 1v3l3 2v2h-11v-2l2-2v-3l-2-1z" fill="#f29a68" stroke="#b0481c"/><path d="M11 12v6" stroke="#444"/><use href="#cursor" x="13" y="5" width="9" height="13"/></svg></button>
    <button aria-label="按面选择图元"><svg viewBox="0 0 26 20"><path d="m6 5 7-3v12l-7 3z" fill="#8cc8ec" stroke="#1c62a8"/><path d="m14 2 6 6m0-6-6 6" stroke="#d01818" stroke-width="2"/><use href="#cursor" x="13" y="5" width="9" height="13"/></svg></button>
    <button aria-label="选择时拖曳"><svg viewBox="0 0 26 20"><path d="M9 2v9M4.500 6.500h9" stroke="#111" stroke-width="1.400"/><path d="m7 4 2-3 2 3zM7 9l2 3 2-3zM6 4.500l-3 2 3 2zM12 4.500l3 2-3 2z" fill="#111"/><use href="#cursor" x="12" y="5" width="9" height="13"/></svg></button>
    <button aria-label="后台进程"><svg viewBox="0 0 26 20"><circle cx="13" cy="10" r="5" fill="none" stroke="#a4a4a4" stroke-width="4" stroke-dasharray="3 1"/></svg></button>
    <button aria-label="过滤"><svg viewBox="0 0 26 20"><path d="M5 3h15v2l-6 6v7l-3-2v-5L5 5z" fill="#c3c8d0" stroke="#444"/></svg></button>
    <span>:0</span>
  </div>
</footer>
</body>
</html>
```
FILE: styles.css
```css
* { box-sizing: border-box; }
body {
  margin: 0;
  height: 100vh;
  display: flex;
  flex-direction: column;
  background: #f0f0f0;
  color: #222;
  font: 12px/17px "Noto Sans", "Noto Sans CJK SC", sans-serif;
  overflow: hidden;
}
button, input, select { font: inherit; color: inherit; margin: 0; padding: 0; border: 0; background: none; border-radius: 0; }
h1, h2, p { margin: 0; font: inherit; }
svg { display: block; flex: none; }
.defs { position: absolute; }

/* title bar */
.titlebar {
  display: flex;
  height: 28px;
  flex: none;
  background: linear-gradient(#8a8a8a, #d4d4d400) right 80px top / 516px 4px no-repeat, #d4d4d4;
}
.qat, .info { display: flex; align-items: flex-start; flex: none; }
.qi { width: 24px; height: 22px; flex: none; }
.logo { margin-right: 5px; }
.qi.on { background: #cde6fa; box-shadow: inset 0 0 0 1px #1565c0; }
.dd { width: 12px; height: 24px; }
.sep { width: 1px; height: 22px; margin: 0 3px; background: #c0c0c0; }
.title {
  flex: 1;
  display: flex;
  justify-content: center;
  gap: 20px;
  line-height: 24px;
  white-space: nowrap;
}
.search {
  width: 180px;
  height: 22px;
  margin-left: 4px;
  padding: 0 3px 2px;
  border: 1px solid #000;
  background: #fff;
}
.search::placeholder { color: #666; font-style: italic; opacity: 1; }
.login { width: 87px; height: 22px; padding-left: 1px; text-align: left; }
.winbtns { display: flex; gap: 1px; padding: 0 1px 0 18px; }

/* tabs */
.tabs { display: flex; height: 20px; flex: none; background: #d4d4d4; }
.tab { padding: 0 10px; height: 20px; line-height: 22px; white-space: nowrap; }
.tab.file { width: 27px; padding: 0; color: #fff; }
.tab.active { background: #f5f5f5; outline: 3px solid #ec4b45; outline-offset: -2px; }
.tab.mini { padding-left: 20px; }

/* ribbon */
.ribbon {
  display: flex;
  flex: none;
  height: 96px;
  margin-bottom: 24px;
  background: #f5f5f5;
  border-bottom: 1px solid #d0d0d0;
  box-shadow: 0 24px #f5f5f5;
}
.panel { display: flex; flex-direction: column; border-right: 1px solid #d8d8d8; }
.tools, .grid4 { height: 76px; padding: 3px 3px 0; }
.tools { display: flex; }
.grid4 { display: grid; grid-template: 36px 36px / 38px 38px; }
.ptitle { height: 18px; line-height: 20px; text-align: center; }
.p-select { width: 51px; }
.p-select .tools { padding-left: 7px; }
.p-select .ptitle { display: flex; align-items: center; justify-content: center; gap: 7px; }
.p-props { width: 83px; }
.p-shape { width: 239px; }
.p-model { width: 201px; }
.p-ctrl { width: 43px; }
.p-ctrl .tools { padding-left: 0; }
.p-conn { width: 229px; }
.p-conn .tools, .p-datum .tools { padding-left: 4px; }
.p-datum { width: 83px; }
.p-plane { width: 125px; border: 0; }
.p-plane .tools { padding-left: 2px; }
.p-family { width: 110px; border: 0; }
.p-family .tools { padding: 3px 0 0; }
.p-family .ptitle { background: #c5c6e4; }
.rb {
  width: 38px;
  height: 72px;
  flex: none;
  display: flex;
  flex-direction: column;
  align-items: center;
  gap: 3px;
  padding-top: 3px;
  white-space: nowrap;
  position: relative;
}
.w42 { width: 42px; }
.w44 { width: 44px; }
.w54 { width: 54px; }
.w66 { width: 66px; }
.ic { width: 32px; height: 32px; overflow: visible; }
.rb:disabled { color: #b4b4b4; }
.chosen { background: #b9d7f3; box-shadow: inset 0 0 0 1px #1565c0; }
.sb { display: grid; place-items: center; }
.menu::after {
  content: "";
  position: absolute;
  right: 2px;
  top: 52px;
  border: 2px solid transparent;
  border-top: 3px solid #333;
}
.marked::after {
  content: "";
  position: absolute;
  inset: -15px -5px -9px -4px;
  border: 3px solid #ec4b45;
  z-index: 1;
}

/* docked panels */
.work { flex: 1; min-height: 0; display: flex; padding-bottom: 2px; }
.side { display: flex; flex-direction: column; gap: 2px; flex: none; color: #000; }
.props { width: 346px; margin-right: 4px; }
.browser { width: 420px; margin-left: 5px; }
.head {
  display: flex;
  justify-content: space-between;
  height: 18px;
  padding: 0 4px;
  background: #bfcddb;
  font-size: 13px;
  line-height: 18px;
}
.x { height: 18px; padding: 0 1px; }
.box {
  flex: 1;
  min-height: 0;
  display: flex;
  flex-direction: column;
  margin-right: 2px;
  border: 1px solid #ddd;
  border-top: 2px solid #6e6e6e;
  border-left: 2px solid #6e6e6e;
  background: #fff;
}
.props .box { margin-right: 1px; }
.preview {
  display: flex;
  align-items: center;
  justify-content: space-between;
  height: 72px;
  padding: 0 1px 0 3px;
  background: linear-gradient(#f6f6f6, #e8e8e8);
  border-bottom: 1px solid #d4d4d4;
}
.selector { display: flex; height: 26px; padding-top: 1px; background: #f0f0f0; }
.selector select {
  appearance: none;
  width: 259px;
  height: 25px;
  padding-left: 4px;
  border: 1px solid #999;
  background: #e1e1e1 url("data:image/svg+xml,%3Csvg xmlns='http://www.w3.org/2000/svg' width='10' height='6'%3E%3Cpath d='M1 1l4 4 4-4' fill='none' stroke='%23444'/%3E%3C/svg%3E") right 3px center no-repeat;
}
.edit { display: flex; align-items: center; gap: 5px; padding-left: 6px; height: 22px; color: #999; white-space: nowrap; }
.params { width: 100%; table-layout: fixed; border-spacing: 0; }
.c1 { width: 172px; }
.params th, .params td {
  height: 20px;
  padding: 0 0 0 10px;
  border-bottom: 1px dotted #666;
  border-right: 1px dotted #666;
  text-align: left;
  font-weight: normal;
  line-height: 17px;
}
.params td { padding: 0; }
.params .grp th { padding: 0 5px 0 2px; background: #dcdcdc; border: 0; }
.grp svg { float: right; margin-top: 3px; }
.params .off { color: #777; }
.val { display: block; width: 100%; height: 19px; padding: 0 2px; }
.val.focus { border: 1px solid #000; padding: 0 1px; }
.params input[type="checkbox"] {
  appearance: none;
  display: block;
  width: 13px;
  height: 13px;
  margin-left: 3px;
  border: 1px solid #333;
  background: #fff;
}
.params input:checked::before {
  content: "";
  display: block;
  width: 8px;
  height: 4px;
  margin: 2px 1px;
  border: solid #333;
  border-width: 0 0 1px 1px;
  transform: rotate(-45deg);
}
.foot {
  display: flex;
  justify-content: space-between;
  align-items: center;
  margin-top: auto;
  height: 24px;
  padding: 0 2px;
  background: #f0f0f0;
}
.foot a { color: #0066cc; }
.apply { width: 73px; height: 19px; background: #cacaca; border: 1px solid #bfbfbf; color: #838383; }

/* view window */
.view {
  flex: 1;
  min-width: 0;
  display: grid;
  grid-template: minmax(0, 1fr) 16px / minmax(0, 1fr) 17px;
  border-top: 2px solid #6e6e6e;
  border-left: 2px solid #6e6e6e;
}
.stage { position: relative; background: #fff; }
.drawing { width: 100%; height: 100%; }
.ln { fill: none; stroke-width: 1; shape-rendering: crispEdges; }
.black { stroke: #000; }
.green { stroke: #008000; }
.red { stroke: #f00; }
.blue { stroke: #00f; }
.dash { stroke-dasharray: 8 26; }
.dim { font-size: 24px; font-weight: 300; fill: #00f; }
.callout { fill: none; stroke: #ec4b45; stroke-width: 3; }
.mdi { position: absolute; top: 7px; right: 3px; display: flex; gap: 4px; }
.cube { position: absolute; top: 61px; right: 16px; }
.face { font-size: 29px; font-weight: 300; fill: #8b9299; }
.navbar {
  position: absolute;
  top: 148px;
  right: 1px;
  width: 36px;
  display: flex;
  flex-direction: column;
  border: 1px solid #bbb;
  border-radius: 5px;
  background: #f2f2f2;
}
.navbar .line { background: linear-gradient(#bbb, #bbb) center top / 26px 1px no-repeat; }
.vscroll { display: flex; flex-direction: column; justify-content: space-between; align-items: flex-start; }
.vscroll i { width: 15px; height: 17px; background: #cdcdcd; }
.viewbar { grid-column: 1 / -1; display: flex; }
.scale { width: 77px; padding-left: 24px; font: 13px/14px "Liberation Serif", serif; color: #000; }
.vi { width: 21px; height: 16px; padding: 0 1px; }
.vi svg { width: 18px; height: 16px; }
.hscroll { flex: 1; display: flex; justify-content: space-between; }
.hscroll i { width: 17px; background: #cdcdcd; }

/* project tree */
.row { display: flex; align-items: center; height: 20px; white-space: nowrap; }
.row span { padding: 0 0 1px 6px; }
.row mark { margin: 0 -3px; padding: 2px 3px; background: #dedede; color: inherit; }
.ti { width: 16px; height: 16px; }
.g {
  --v: repeating-linear-gradient(#999 0 1px, transparent 1px 2px);
  --h: repeating-linear-gradient(90deg, #999 0 1px, transparent 1px 2px);
  width: 20px;
  height: 20px;
  padding: 6px 0 0 4px;
  background-repeat: no-repeat;
}
.g svg { width: 9px; height: 9px; }
.g.v { background-image: var(--v); background-position: 8px 0; background-size: 1px 20px; }
.g.all { background-image: var(--v), var(--h); background-position: 8px 0, 8px 10px; background-size: 1px 20px, 14px 1px; }
.g.end { background-image: var(--v), var(--h); background-position: 8px 0, 8px 10px; background-size: 1px 10px, 14px 1px; }
.g.down { background-image: var(--v), var(--h); background-position: 8px 10px, 8px 10px; background-size: 1px 10px, 12px 1px; }

/* status bar */
.status {
  display: flex;
  justify-content: space-between;
  flex: none;
  height: 23px;
  border-top: 1px solid #8c8c8c;
  background: #d4d4d4;
  color: #000;
  line-height: 24px;
}
.status p { padding-left: 2px; white-space: nowrap; }
.sticons { display: flex; padding-right: 67px; }
.sticons button { width: 25px; height: 22px; }
.sticons svg { width: 25px; height: 20px; }
```
